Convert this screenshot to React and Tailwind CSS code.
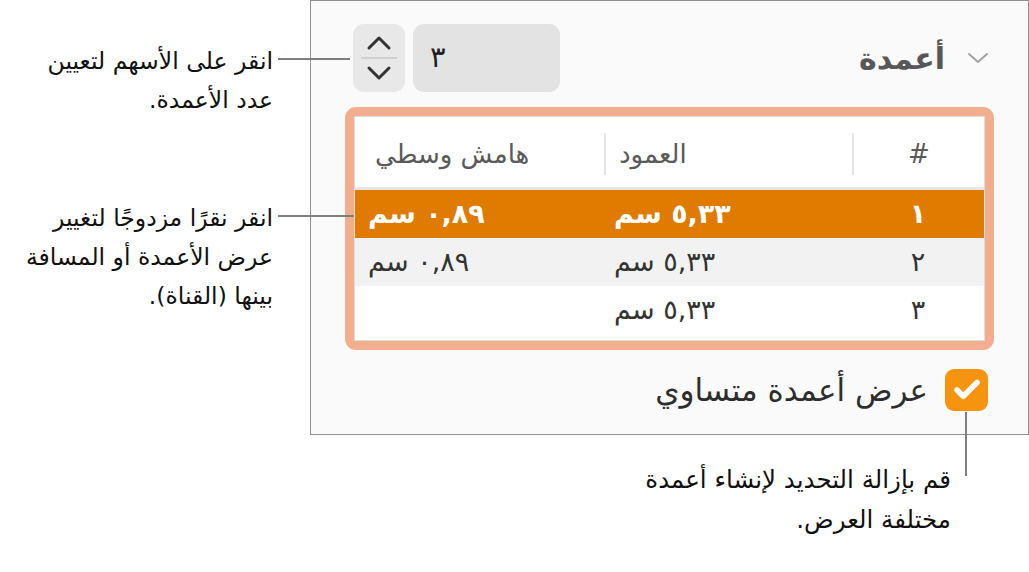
import { Check } from 'lucide-react';

// gray leader line used by the side notes
const Leader = ({ className }) => (
  <span className={`absolute h-[1.5px] bg-[#7f7f7f] ${className}`} />
);

const SideNote = ({ lines, leaderClass, className }) => (
  <div className={`relative text-[23.5px] leading-[39px] ${className}`}>
    {lines.map((l) => (
      <div key={l}>{l}</div>
    ))}
    <Leader className={leaderClass} />
  </div>
);

const rows = [
  { n: '١', col: '٥,٣٣ سم', gap: '٠,٨٩ سم', cls: 'bg-[#e07b00] text-white font-bold' },
  { n: '٢', col: '٥,٣٣ سم', gap: '٠,٨٩ سم', cls: 'bg-[#f2f2f2] text-[#333]' },
  { n: '٣', col: '٥,٣٣ سم', gap: '', cls: 'bg-white text-[#333]' },
];

const App = () => {
  return (
    <div className="relative flex w-[1029px] h-[572px] overflow-hidden bg-white text-[#111] font-['DejaVu_Sans',sans-serif]">
      {/* Side notes */}
      <div dir="rtl" className="w-[310px] shrink-0 pr-[37px] pt-[42px]">
        <SideNote
          lines={['انقر على الأسهم لتعيين', 'عدد الأعمدة.']}
          leaderClass="top-[16px] -right-[77px] w-[72px]"
        />
        <SideNote
          className="mt-[79px]"
          lines={['انقر نقرًا مزدوجًا لتغيير', 'عرض الأعمدة أو المسافة', 'بينها (القناة).']}
          leaderClass="top-[16px] -right-[81px] w-[76px]"
        />
      </div>

      <div className="flex flex-col">
        {/* Inspector panel */}
        <div dir="rtl" className="w-[719px] h-[435px] border border-[#8f8f8f] bg-[#fafafa] pt-[23px] px-[34px]">
          {/* Columns header + stepper */}
          <div className="flex h-[68px] items-center justify-between pr-[5px] pl-[8px]">
            <div className="flex items-center gap-[22px]">
              <svg width="22" height="12" viewBox="0 0 22 12" fill="none" stroke="#a3a3a3" strokeWidth="2" strokeLinecap="round" strokeLinejoin="round">
                <polyline points="2,2 11,10 20,2" />
              </svg>
              <span className="text-[30px] font-bold text-[#575757]">أعمدة</span>
            </div>
            <div className="flex h-full items-stretch gap-[8px]">
              <div dir="ltr" className="flex w-[147px] items-center rounded-[11px] bg-[#e3e3e3] pl-[17px] text-[29px] text-[#1f1f1f]">
                ٣
              </div>
              <div className="flex w-[52px] flex-col items-center justify-center rounded-[11px] bg-[#e8e8e8]">
                <svg width="26" height="16" viewBox="0 0 26 16" fill="none" stroke="#333" strokeWidth="3" strokeLinecap="round" strokeLinejoin="round">
                  <polyline points="3,13 13,3 23,13" />
                </svg>
                <div className="my-[6px] h-[1.5px] w-[36px] bg-[#cfcfcf]" />
                <svg width="26" height="16" viewBox="0 0 26 16" fill="none" stroke="#333" strokeWidth="3" strokeLinecap="round" strokeLinejoin="round">
                  <polyline points="3,3 13,13 23,3" />
                </svg>
              </div>
            </div>
          </div>

          {/* Column widths table */}
          <div className="mt-[15px] rounded-[11px] border-[9px] border-[#f2ae8e]">
            <div className="h-[225px] border border-[#dedede] bg-white">
              <div className="flex h-[73px] items-center border-b-[3px] border-[#e6e6e6] pt-[4px] text-[26px] text-[#5a5a5a]">
                <div className="w-[130px] text-center">#</div>
                <div className="h-[42px] w-[2px] bg-[#e4e4e4]" />
                <div className="w-[246px] pl-[13px] text-left">العمود</div>
                <div className="h-[42px] w-[2px] bg-[#e4e4e4]" />
                <div className="w-[248px] pl-[19px] text-left">هامش وسطي</div>
              </div>
              {rows.map((r) => (
                <div key={r.n} className={`flex h-[48px] items-center text-[27px] ${r.cls}`}>
                  <div className="w-[132px] text-center">{r.n}</div>
                  <div className="w-[248px] pl-[10px] text-left">{r.col}</div>
                  <div className="w-[248px] pl-[12px] text-left">{r.gap}</div>
                </div>
              ))}
            </div>
          </div>

          {/* Equal widths checkbox */}
          <div className="mt-[17px] flex items-center gap-[17px] pr-[6px]">
            <div className="flex h-[42px] w-[43px] items-center justify-center rounded-[9px] bg-[#f7940f]">
              <Check className="h-[30px] w-[30px] text-white" strokeWidth={4.5} />
            </div>
            <span className="text-[31px] text-[#2d2d2d]">عرض أعمدة متساوي</span>
          </div>
        </div>

        {/* Note under the panel */}
        <div dir="rtl" className="mt-[25px] pr-[78px] text-[24.5px] leading-[40px]">
          <div>قم بإزالة التحديد لإنشاء أعمدة</div>
          <div>مختلفة العرض.</div>
        </div>
      </div>

      <span className="absolute left-[965px] top-[412px] h-[64px] w-[1.5px] bg-[#7f7f7f]" />
    </div>
  );
};

export default App;
